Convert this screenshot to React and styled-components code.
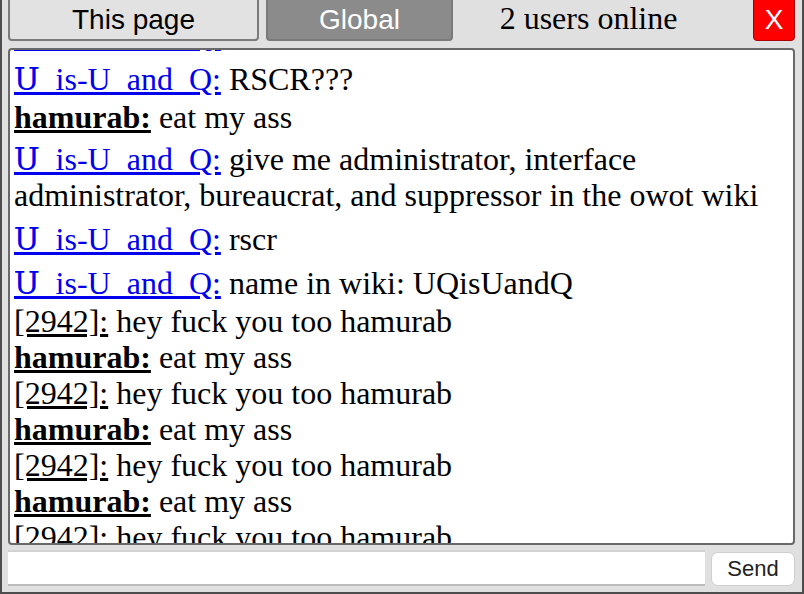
import { createGlobalStyle } from "styled-components";
import styled from "styled-components";

const GlobalStyle = createGlobalStyle`
  html, body {
    margin: 0;
    padding: 0;
    background: #e0e0e0;
    overflow: hidden;
  }
`;

const Window = styled.div`
  box-sizing: border-box;
  margin-top: -4px;
  height: 598px;
  width: 804px;
  background-color: #e0e0e0;
  border: 2px solid #4d4d4d;
  border-top: none;
  padding: 0 7px 6px 6px;
  display: flex;
  flex-direction: column;
`;

const TopBar = styled.div`
  display: flex;
  height: 45px;
  flex: none;
`;

const Tab = styled.div`
  box-sizing: border-box;
  width: ${(p) => p.$width}px;
  margin-right: ${(p) => p.$gap || 0}px;
  height: 100%;
  display: flex;
  align-items: center;
  justify-content: center;
  padding-top: 2px;
  border: 2px solid #7a7a7a;
  border-radius: 4px;
  background-color: ${(p) => (p.$active ? "#8b8b8b" : "#e2e2e2")};
  color: ${(p) => (p.$active ? "#ffffff" : "#000000")};
  font-family: "Liberation Sans", Arial, sans-serif;
  font-size: 28px;
`;

const OnlineLabel = styled.div`
  flex: 1;
  display: flex;
  align-items: center;
  justify-content: center;
  padding-right: 29px;
  font-family: "Liberation Serif", serif;
  font-size: 32px;
  color: #000;
`;

const CloseButton = styled.div`
  box-sizing: border-box;
  width: 42px;
  height: 100%;
  display: flex;
  align-items: center;
  justify-content: center;
  padding-top: 2px;
  background-color: #ff0000;
  border: 1px solid #a80000;
  border-radius: 4px;
  color: #fff;
  font-family: "Liberation Sans", Arial, sans-serif;
  font-size: 28px;
`;

const ChatBox = styled.div`
  box-sizing: border-box;
  margin-top: 7px;
  height: 497px;
  flex: none;
  background: #fff;
  border: 2px solid #696969;
  border-radius: 4px;
  overflow: hidden;
  padding: 0 4px;
`;

const MessageList = styled.div`
  margin-top: -39px;
  font-family: "Liberation Serif", "DejaVu Serif", serif;
  font-size: 32px;
  line-height: 36px;
  color: #000;
`;

const Message = styled.div`
  padding-top: ${(p) => (p.$tall ? 6 : 0)}px;
  padding-bottom: ${(p) => (p.$tall ? 2 : 0)}px;
`;

const Name = styled.span`
  text-decoration: underline;
  color: ${(p) => (p.$link ? "#0000ee" : "#000")};
  font-weight: ${(p) => (p.$bold ? "bold" : "normal")};
  cursor: pointer;
`;

const InputRow = styled.div`
  display: flex;
  gap: 6px;
  margin-top: 5px;
  height: 36px;
  flex: none;
  align-items: stretch;
`;

const TextInput = styled.input`
  box-sizing: border-box;
  flex: 1;
  border: none;
  border-top: 2px solid #d2d2d2;
  border-bottom: 2px solid #bcbcbc;
  background: #fff;
  outline: none;
  font-size: 20px;
`;

const SendButton = styled.button`
  box-sizing: border-box;
  width: 84px;
  margin: 2px 0 0;
  height: 34px;
  background: #fff;
  border: 1px solid #cfcfcf;
  border-radius: 7px;
  font-family: "Liberation Sans", Arial, sans-serif;
  font-size: 22px;
  color: #222;
  padding: 0;
`;

const UQ = "Ս_is-U_and_Q:";

const messages = [
  { user: UQ, kind: "link", text: "hi" },
  { user: UQ, kind: "link", text: "RSCR???" },
  { user: "hamurab:", kind: "bold", text: "eat my ass" },
  {
    user: UQ,
    kind: "link",
    text: "give me administrator, interface administrator, bureaucrat, and suppressor in the owot wiki",
  },
  { user: UQ, kind: "link", text: "rscr" },
  { user: UQ, kind: "link", text: "name in wiki: UQisUandQ" },
  { user: "[2942]:", kind: "plain", text: "hey fuck you too hamurab" },
  { user: "hamurab:", kind: "bold", text: "eat my ass" },
  { user: "[2942]:", kind: "plain", text: "hey fuck you too hamurab" },
  { user: "hamurab:", kind: "bold", text: "eat my ass" },
  { user: "[2942]:", kind: "plain", text: "hey fuck you too hamurab" },
  { user: "hamurab:", kind: "bold", text: "eat my ass" },
  { user: "[2942]:", kind: "plain", text: "hey fuck you too hamurab" },
];

export default function App() {
  return (
    <>
      <GlobalStyle />
      <Window>
        <TopBar>
          <Tab $width={251} $gap={7}>This page</Tab>
          <Tab $width={187} $active>Global</Tab>
          <OnlineLabel>2 users online</OnlineLabel>
          <CloseButton>X</CloseButton>
        </TopBar>
        <ChatBox>
          <MessageList>
            {messages.map((m, i) => (
              <Message key={i} $tall={m.kind === "link"}>
                <Name $link={m.kind === "link"} $bold={m.kind === "bold"}>
                  {m.user}
                </Name>{" "}
                {m.text}
              </Message>
            ))}
          </MessageList>
        </ChatBox>
        <InputRow>
          <TextInput type="text" />
          <SendButton>Send</SendButton>
        </InputRow>
      </Window>
    </>
  );
}
